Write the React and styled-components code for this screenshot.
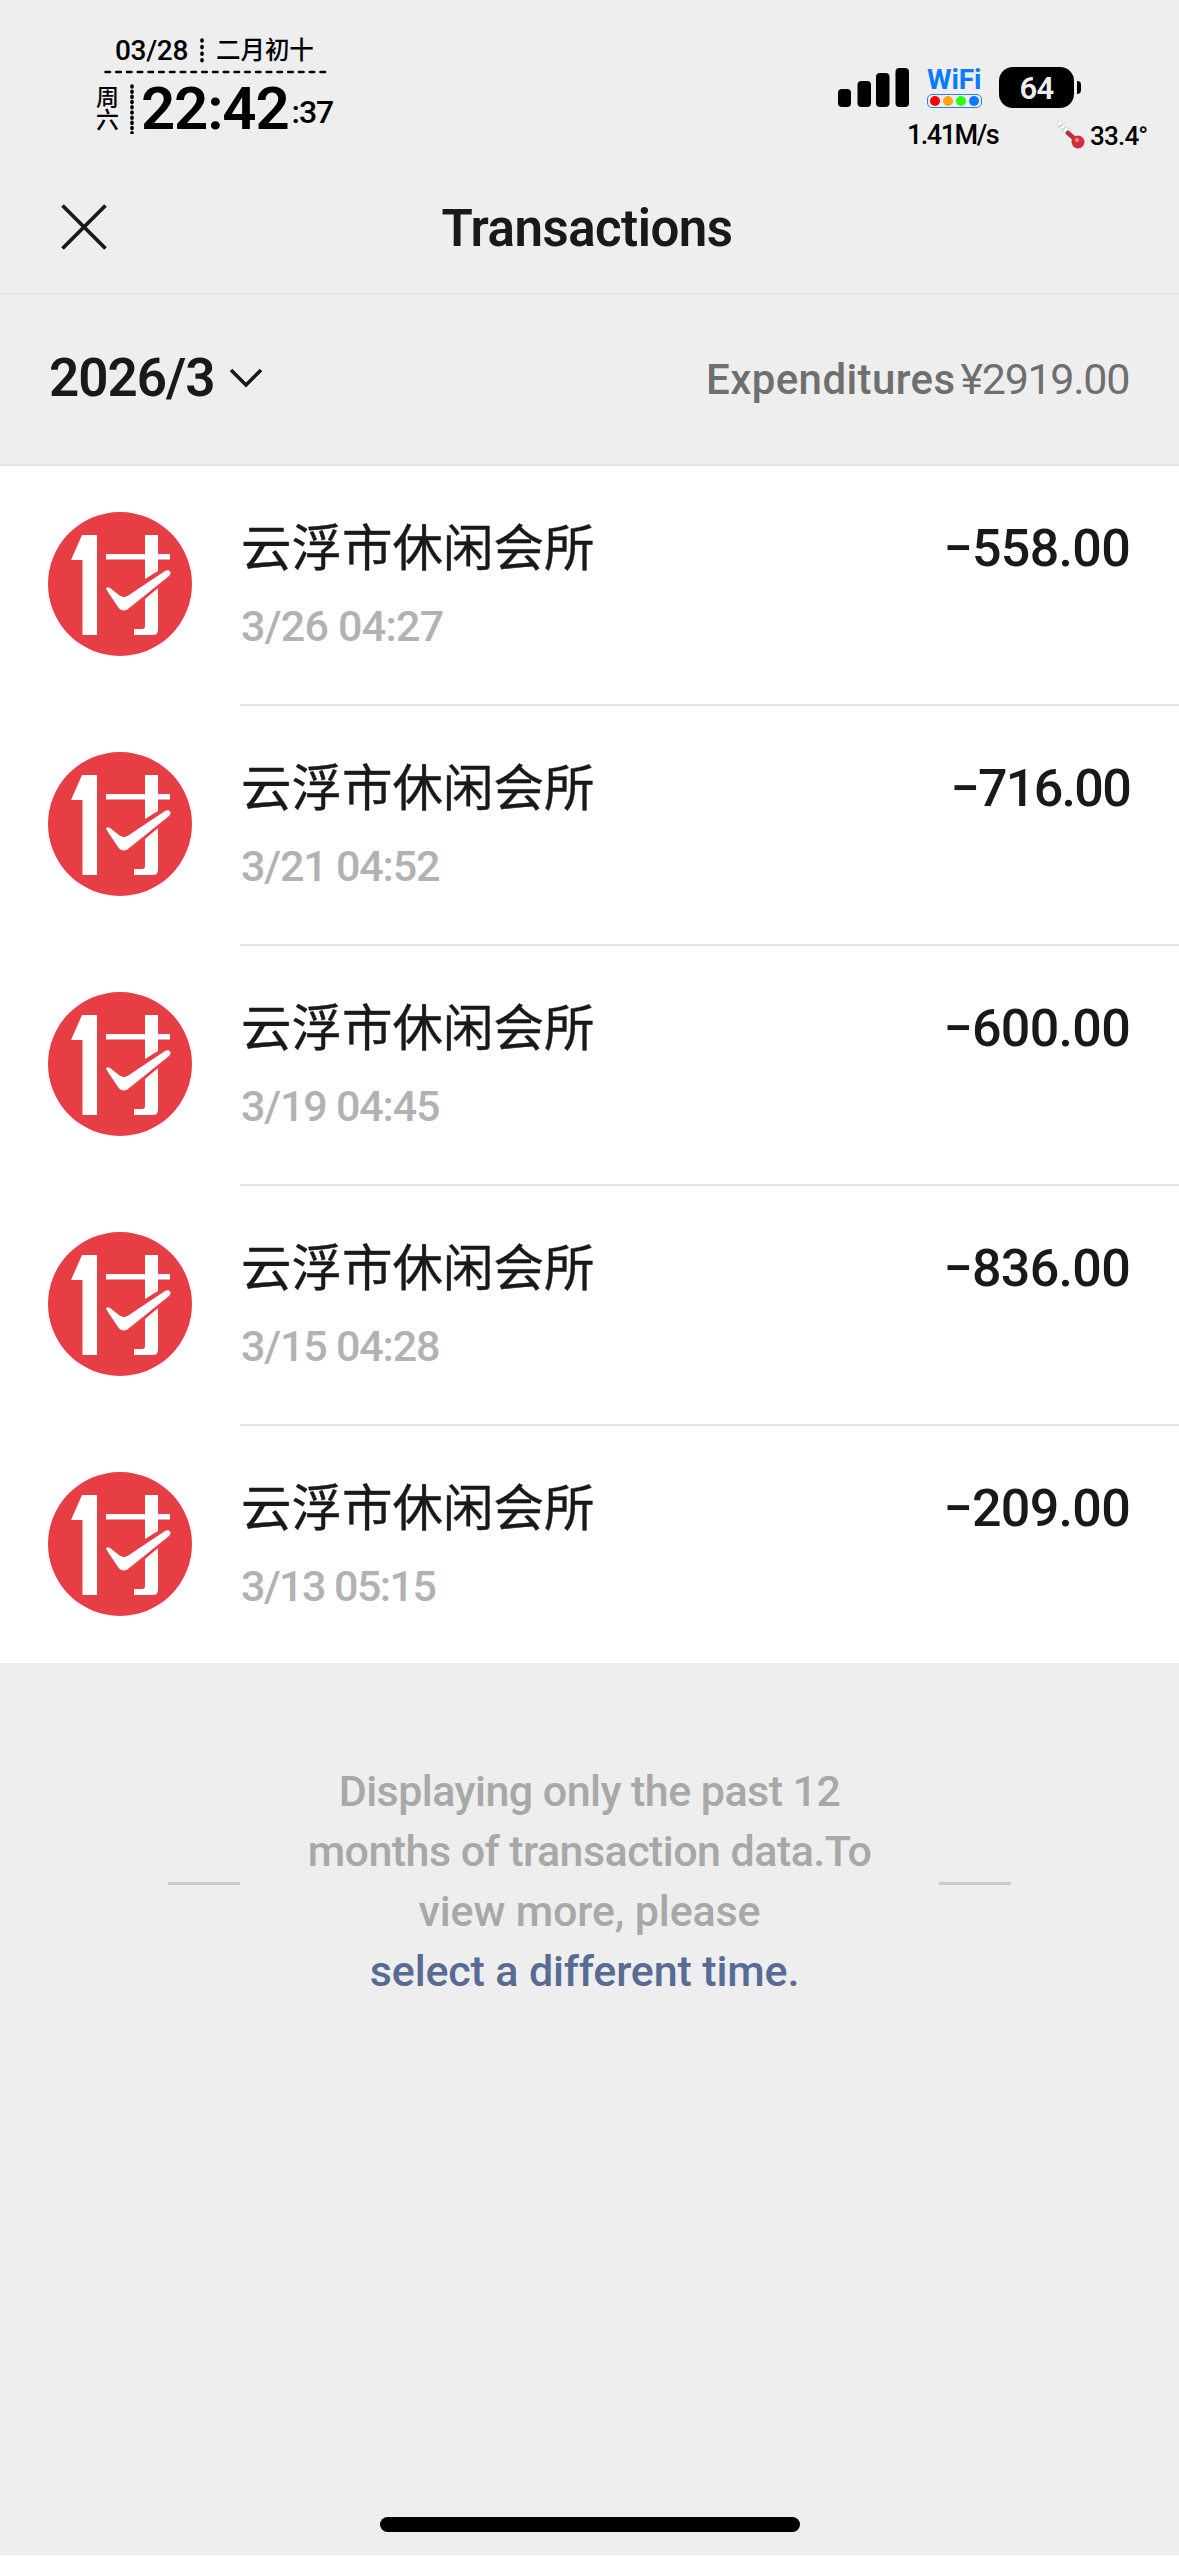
import React from "react";
import styled, { createGlobalStyle, ThemeProvider } from "styled-components";

const theme = {
  colors: {
    page: "#eeeeee",
    card: "#ffffff",
    line: "#e5e5e5",
    text: "#191919",
    grey: "#6f6f6f",
    date: "#b2b2b2",
    note: "#a8a8a8",
    link: "#576b95",
    red: "#e73e43"
  }
};

const GlobalStyle = createGlobalStyle`
  body {
    margin: 0;
    background: #ffffff;
    font-family: Roboto, "Noto Sans CJK SC", sans-serif;
  }
  svg {
    display: block;
  }
`;

const Screen = styled.div`
  display: flex;
  flex-direction: column;
  box-sizing: border-box;
  width: 1179px;
  height: 2555px;
  background: ${p => p.theme.colors.page};
  color: ${p => p.theme.colors.text};
`;

const StatusBar = styled.header`
  display: flex;
  justify-content: space-between;
  box-sizing: border-box;
  height: 160px;
  padding: 35px 31px 0 96px;
  color: #000;
`;

const Clock = styled.div`
  display: flex;
  flex-direction: column;
`;

const DateLine = styled.div`
  display: flex;
  align-items: center;
  gap: 12px;
  height: 32px;
  margin-left: 8px;
  padding-left: 11px;
  padding-bottom: 3px;
  width: 210px;
  font-size: 28px;
  font-weight: 500;
  line-height: 30px;
  letter-spacing: -0.3px;
  white-space: nowrap;
`;

const Lunar = styled.span`
  font-size: 24.5px;
  letter-spacing: -0.1px;
`;

const TimeLine = styled.div`
  display: flex;
  height: 64px;
`;

const Weekday = styled.div`
  width: 24px;
  margin-top: 12px;
  font-size: 23px;
  font-weight: 500;
  line-height: 23px;
`;

const WeekdayRule = styled.div`
  margin: 10px 0 0 10px;
`;

const Time = styled.div`
  display: flex;
  align-items: baseline;
  margin-left: 7px;
  font-size: 60px;
  font-weight: 600;
  line-height: 70px;
  letter-spacing: -1.2px;
`;

const Seconds = styled.span`
  align-self: flex-start;
  margin: 3px 0 0 3px;
  font-size: 32px;
  font-weight: 500;
  letter-spacing: -1px;
`;

const Status = styled.div`
  display: flex;
  flex-direction: column;
  width: 314px;
  padding-top: 32px;
`;

const StatusIcons = styled.div`
  display: flex;
  height: 41px;
`;

const Wifi = styled.div`
  display: flex;
  flex-direction: column;
  width: 56px;
  margin: 0 16px 0 18px;
  color: #0a7bff;
  font-size: 28px;
  font-weight: 700;
  line-height: 26px;
  letter-spacing: -0.1px;
`;

const WifiDots = styled.div`
  display: flex;
  align-items: center;
  justify-content: center;
  gap: 3px;
  box-sizing: border-box;
  width: 55px;
  height: 16px;
  margin-top: 1px;
  border: 1.5px solid #2d82ee;
  border-radius: 5px;
`;

const Dot = styled.i`
  width: 10px;
  height: 10px;
  border-radius: 50%;
  background: ${p => p.color};
`;

const Battery = styled.div`
  width: 75px;
  height: 41px;
  border-radius: 14px;
  background: #000;
  color: #eee;
  font-size: 31px;
  font-weight: 600;
  line-height: 43px;
  letter-spacing: -0.8px;
  text-align: center;
`;

const BatteryTip = styled.div`
  width: 4px;
  height: 13px;
  margin: 14px 0 0 3px;
  border-radius: 0 5px 5px 0;
  background: #000;
`;

const StatusInfo = styled.div`
  display: flex;
  align-items: center;
  height: 32px;
  margin-top: 11px;
  padding-left: 73px;
  font-size: 27px;
  font-weight: 500;
  line-height: 32px;
  letter-spacing: -1.5px;
  white-space: nowrap;
`;

const Speed = styled.span`
  width: 149px;
`;

const Temperature = styled.span`
  margin: 2px 0 0 4px;
  font-size: 26px;
  letter-spacing: -0.8px;
`;

const NavBar = styled.nav`
  display: grid;
  grid-template-columns: 110px 1fr 110px;
  align-items: center;
  box-sizing: border-box;
  height: 135px;
  border-bottom: 2px solid ${p => p.theme.colors.line};
`;

const CloseButton = styled.button`
  padding: 0 0 0 60px;
  border: 0;
  background: none;
`;

const Title = styled.h1`
  margin: 0;
  padding: 4px 5px 0 0;
  font-size: 51px;
  font-weight: 600;
  line-height: 64px;
  letter-spacing: -0.5px;
  text-align: center;
`;

const Summary = styled.section`
  display: flex;
  align-items: center;
  justify-content: space-between;
  box-sizing: border-box;
  height: 171px;
  padding: 0 50px 4px 49px;
  border-bottom: 2px solid ${p => p.theme.colors.line};
`;

const Month = styled.div`
  display: flex;
  align-items: center;
  gap: 14px;
  font-size: 53px;
  font-weight: 600;
  line-height: 64px;
  letter-spacing: -1px;
`;

const Expenditures = styled.div`
  padding-top: 4px;
  color: ${p => p.theme.colors.grey};
  font-size: 42px;
  font-weight: 500;
  line-height: 50px;
  letter-spacing: 0.4px;
`;

const Total = styled.span`
  margin-left: 5px;
  font-size: 43px;
  font-weight: 400;
  letter-spacing: -1.3px;
`;

const List = styled.ul`
  display: flex;
  flex-direction: column;
  margin: 0;
  padding: 0;
  height: 1197px;
  list-style: none;
  background: ${p => p.theme.colors.card};
`;

const Row = styled.li`
  display: flex;
  flex: none;
  gap: 48px;
  height: ${p => (p.$last ? 237 : 240)}px;
  padding-left: 48px;
`;

const Avatar = styled.div`
  padding-top: 46px;
`;

const Details = styled.div`
  display: grid;
  grid-template-columns: 1fr auto;
  grid-template-rows: 72px 60px;
  align-content: start;
  box-sizing: border-box;
  flex: 1;
  padding: 47px 49px 0 1px;
  border-bottom: 2px solid ${p => (p.$last ? "transparent" : p.theme.colors.line)};
`;

const Name = styled.div`
  font-size: 50.5px;
  line-height: 72px;
  -webkit-text-stroke: 0.4px;
`;

// $ones tightens figures that contain the narrow digit 1
const Amount = styled.div`
  font-size: 52px;
  font-weight: 500;
  line-height: 72px;
  letter-spacing: ${p => -0.7 - p.$ones}px;
`;

const When = styled.div`
  padding-top: 15px;
  color: ${p => p.theme.colors.date};
  font-size: 43px;
  font-weight: 500;
  line-height: 52px;
  letter-spacing: ${p => -0.75 - p.$ones * 0.4}px;
`;

const Note = styled.footer`
  display: flex;
  align-items: center;
  justify-content: center;
  gap: 48px;
  height: 240px;
  margin-top: 98px;
`;

const Dash = styled.span`
  width: 72px;
  height: 3px;
  margin-top: 5px;
  background: #c9c9c9;
`;

const NoteText = styled.p`
  width: 603px;
  margin: 0;
  color: ${p => p.theme.colors.note};
  font-size: 43px;
  font-weight: 500;
  line-height: 60px;
  letter-spacing: -0.55px;
  text-align: center;
  white-space: nowrap;
`;

const NoteEnd = styled.span`
  letter-spacing: -0.15px;
`;

const Link = styled.a`
  margin-right: 10px;
  color: ${p => p.theme.colors.link};
`;

const HomeBar = styled.div`
  width: 420px;
  height: 15px;
  margin: auto auto 23px;
  border-radius: 8px;
  background: #000;
`;

const DottedLine = ({ height, step }) => (
  <svg width="4" height={height} viewBox={`0 0 4 ${height}`}>
    <line
      x1="2"
      x2="2"
      y1="2"
      y2={height - 1}
      stroke="#000"
      strokeWidth="3.6"
      strokeLinecap="round"
      strokeDasharray={`1 ${step - 1}`}
    />
  </svg>
);

const Signal = () => (
  <svg width="75" height="41" viewBox="0 0 75 41">
    <rect x="4" y="22" width="13" height="18" rx="4" />
    <rect x="23.5" y="14" width="13.5" height="26" rx="4" />
    <rect x="42" y="6" width="13.5" height="34" rx="4" />
    <rect x="61.5" y="1" width="13.5" height="39" rx="4" />
  </svg>
);

const Thermometer = () => (
  <svg width="30" height="30" viewBox="0 0 30 30">
    <path d="M4 4 L12 12" stroke="#d5e2e6" strokeWidth="7" strokeLinecap="round" />
    <path d="M4 4 L12 12" stroke="#f8fbfc" strokeWidth="5" strokeLinecap="round" />
    <path
      d="M3 7l4-3M6 10l4-3M9 13l4-3"
      stroke="#9db0b6"
      strokeWidth="1"
    />
    <path d="M12 13 L20 20" stroke="#b8323b" strokeWidth="4.5" strokeLinecap="round" />
    <circle cx="22" cy="22" r="6.5" fill="#d22f3c" />
    <circle cx="21" cy="20" r="2" fill="#ef8d92" />
  </svg>
);

const PayLogo = () => (
  <svg width="144" height="144" viewBox="0 0 144 144">
    <circle cx="72" cy="72" r="72" fill={theme.colors.red} />
    <g fill="#fff">
      <path d="M34 23H49V123H34.500V48H23Z" />
      <path d="M58 42H97V23H110V42H122V47.500H110V59L97 67V47.500H58Z" />
      <path d="M58 77Q59 74 62 76L71 83Q76 87 81 83L117 59Q121 57 122.500 60Q123 62 121 64L80 97Q74 101 70 95Z" />
      <path d="M97 87L110 76V118Q110 123 105 123H86V117H94Q97 117 97 114Z" />
    </g>
  </svg>
);

const transactions = [
  { name: "云浮市休闲会所", when: "3/26 04:27", amount: "−558.00" },
  { name: "云浮市休闲会所", when: "3/21 04:52", amount: "−716.00" },
  { name: "云浮市休闲会所", when: "3/19 04:45", amount: "−600.00" },
  { name: "云浮市休闲会所", when: "3/15 04:28", amount: "−836.00" },
  { name: "云浮市休闲会所", when: "3/13 05:15", amount: "−209.00" }
];

const countOnes = text => text.split("1").length - 1;

const App = () => {
  return (
    <ThemeProvider theme={theme}>
      <GlobalStyle />
      <Screen>
        <StatusBar>
          <Clock>
            <DateLine>
              <span>03/28</span>
              <DottedLine height={26} step={6.6} />
              <Lunar>二月初十</Lunar>
            </DateLine>
            <svg width="232" height="4" viewBox="0 0 232 4">
              <path
                d="M9.500 3H229"
                transform="translate(0 -1)"
                stroke="#000"
                strokeWidth="2.600"
                strokeLinecap="round"
                strokeDasharray="4.500 6.250"
              />
            </svg>
            <TimeLine>
              <Weekday>
                周
                <br />
                六
              </Weekday>
              <WeekdayRule>
                <DottedLine height={50} step={5.2} />
              </WeekdayRule>
              <Time>
                22:42<Seconds>:37</Seconds>
              </Time>
            </TimeLine>
          </Clock>
          <Status>
            <StatusIcons>
              <Signal />
              <Wifi>
                WiFi
                <WifiDots>
                  <Dot color="#ff0000" />
                  <Dot color="#ffa514" />
                  <Dot color="#2bff0a" />
                  <Dot color="#0a7bff" />
                </WifiDots>
              </Wifi>
              <Battery>64</Battery>
              <BatteryTip />
            </StatusIcons>
            <StatusInfo>
              <Speed>1.41M/s</Speed>
              <Thermometer />
              <Temperature>33.4°</Temperature>
            </StatusInfo>
          </Status>
        </StatusBar>
        <NavBar>
          <CloseButton aria-label="Close">
            <svg width="48" height="48" viewBox="0 0 48 48">
              <path d="M2.500 2.500L45.500 45.500M45.500 2.500L2.500 45.500" stroke="#191919" strokeWidth="3.800" />
            </svg>
          </CloseButton>
          <Title>Transactions</Title>
        </NavBar>
        <Summary>
          <Month>
            2026/3
            <svg width="34" height="20" viewBox="0 0 34 20" fill="none">
              <path d="M2 2L17 17L32 2" stroke="#191919" strokeWidth="3.600" />
            </svg>
          </Month>
          <Expenditures>
            Expenditures<Total>¥2919.00</Total>
          </Expenditures>
        </Summary>
        <List>
          {transactions.map((item, i) => {
            const last = i === transactions.length - 1;
            return (
              <Row key={item.when} $last={last}>
                <Avatar>
                  <PayLogo />
                </Avatar>
                <Details $last={last}>
                  <Name>{item.name}</Name>
                  <Amount $ones={countOnes(item.amount)}>{item.amount}</Amount>
                  <When $ones={countOnes(item.when)}>{item.when}</When>
                </Details>
              </Row>
            );
          })}
        </List>
        <Note>
          <Dash />
          <NoteText>
            Displaying only the past 12
            <br />
            months of transaction data.To
            <br />
            <NoteEnd>
              view more, please
              <br />
              <Link>select a different time.</Link>
            </NoteEnd>
          </NoteText>
          <Dash />
        </Note>
        <HomeBar />
      </Screen>
    </ThemeProvider>
  );
};

export default App;
